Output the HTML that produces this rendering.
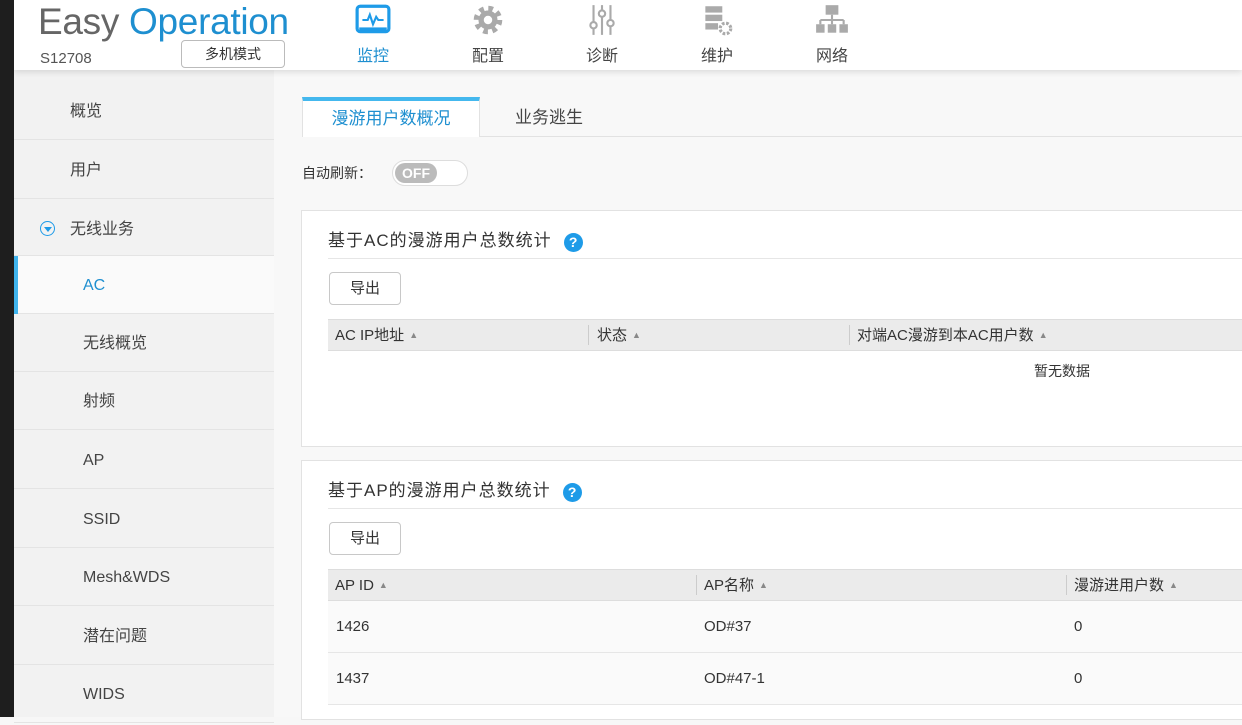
<!DOCTYPE html>
<html><head><meta charset="utf-8"><style>
*{box-sizing:border-box;margin:0;padding:0}
body{width:1242px;height:717px;overflow:hidden;background:#f7f7f7;font-family:"Liberation Sans","Noto Sans CJK SC",sans-serif;position:relative;color:#333}
.strip{position:absolute;left:0;top:0;width:14px;height:717px;background:#1e1e1e;z-index:5}
.hdr{position:absolute;left:14px;top:0;width:1228px;height:70px;background:#fff;box-shadow:0 2px 6px rgba(0,0,0,.12);z-index:3}
.logo{position:absolute;left:24px;top:1px;font-size:37px;color:#666;letter-spacing:-0.3px}
.logo span{color:#1e8fd0}
.model{position:absolute;left:26px;top:50px;font-size:15px;color:#555}
.mbtn{position:absolute;left:167px;top:40px;width:104px;height:28px;border:1px solid #bbb;border-radius:4px;font-size:14px;text-align:center;line-height:26px;color:#333;background:#fff}
.nav{position:absolute;top:0;width:60px;text-align:center;font-size:16px;color:#444}
.nav svg{display:block;margin:3px auto 5px}
.side{position:absolute;left:14px;top:70px;width:260px;height:647px;background:#f2f2f2}
.it{position:absolute;left:0;width:260px;height:58px;border-bottom:1px solid #e4e4e4;font-size:16px;color:#444;line-height:60px}
.main{position:absolute;left:274px;top:70px;width:968px;height:647px;background:#f8f8f8}
.tab{position:absolute;top:27px;height:40px;font-size:17px;line-height:42px;text-align:center}
.panel{position:absolute;left:27px;width:950px;background:#fff;border:1px solid #e2e2e2}
.ttl{position:absolute;left:26px;font-size:17px;color:#333;letter-spacing:1px}
.q{display:inline-block;width:19px;height:19px;border-radius:50%;background:#1e9be8;color:#fff;font-size:14px;font-weight:bold;text-align:center;line-height:19px;margin-left:12px;vertical-align:-1px;letter-spacing:0}
.ln{position:absolute;left:26px;right:0;height:1px;background:#e6e6e6}
.btn{position:absolute;left:27px;width:72px;height:33px;border:1px solid #c8c8c8;border-radius:4px;font-size:15px;text-align:center;line-height:31px;background:#fff}
.th{position:absolute;left:26px;right:0;height:32px;background:#ebebeb;border-top:1px solid #ddd;border-bottom:1px solid #ddd;font-size:15px;line-height:30px}
.th span{position:absolute;top:0}
.th i{font-style:normal;font-size:9px;color:#888;margin-left:5px;vertical-align:2px}
.sep{position:absolute;top:5px;width:1px;height:20px;background:#ccc}
.row{position:absolute;left:26px;right:0;height:52px;border-bottom:1px solid #e6e6e6;font-size:15px;line-height:52px;background:#fafafa}
.row span{position:absolute}
</style></head><body>
<div class="strip"></div>
<div class="hdr">
<div class="logo">Easy <span>Operation</span></div>
<div class="model">S12708</div>
<div class="mbtn">多机模式</div>
<div class="nav" style="left:329px;color:#1e8fd0"><svg width="36" height="34" viewBox="0 0 34 30"><rect x="2" y="2" width="30" height="24" rx="3" fill="none" stroke="#1e9be8" stroke-width="3"/><path d="M7 15h5l2-5 3 9 3-7 2 3h5" fill="none" stroke="#1e9be8" stroke-width="2"/><rect x="4" y="22" width="26" height="3" fill="#1e9be8"/></svg>监控</div>
<div class="nav" style="left:444px"><svg width="36" height="34" viewBox="0 0 34 30"><circle cx="17" cy="15" r="10" fill="none" stroke="#aaa" stroke-width="7" stroke-dasharray="4 3.85"/><circle cx="17" cy="15" r="9" fill="#aaa"/><circle cx="17" cy="15" r="4" fill="#fff"/></svg>配置</div>
<div class="nav" style="left:558px"><svg width="36" height="34" viewBox="0 0 34 30"><g stroke="#aaa" stroke-width="2"><path d="M9 1v28M17 1v28M25 1v28"/></g><g fill="#fff" stroke="#aaa" stroke-width="2"><circle cx="9" cy="20" r="3"/><circle cx="17" cy="9" r="3"/><circle cx="25" cy="18" r="3"/></g></svg>诊断</div>
<div class="nav" style="left:673px"><svg width="36" height="34" viewBox="0 0 34 30"><rect x="6" y="2" width="16" height="6" fill="#aaa"/><rect x="6" y="10" width="16" height="6" fill="#aaa"/><rect x="6" y="18" width="12" height="6" fill="#aaa"/><circle cx="25" cy="23" r="5" fill="none" stroke="#aaa" stroke-width="3" stroke-dasharray="2.5 1.5"/></svg>维护</div>
<div class="nav" style="left:788px"><svg width="36" height="34" viewBox="0 0 34 30"><rect x="11" y="1" width="12" height="9" fill="#aaa"/><path d="M17 10v5M6 15h22M6 15v4M17 15v4M28 15v4" stroke="#aaa" stroke-width="2" fill="none"/><rect x="2" y="19" width="8" height="8" fill="#aaa"/><rect x="13" y="19" width="8" height="8" fill="#aaa"/><rect x="24" y="19" width="8" height="8" fill="#aaa"/></svg>网络</div>
</div>
<div class="side">
<div class="it" style="top:12px;padding-left:56px">概览</div>
<div class="it" style="top:71px;padding-left:56px">用户</div>
<div class="it" style="top:130px;padding-left:56px;height:56px"><span style="position:absolute;left:26px;top:21px;width:15px;height:15px;border:1.5px solid #1e9be8;border-radius:50%"></span><span style="position:absolute;left:30px;top:27px;border-left:4px solid transparent;border-right:4px solid transparent;border-top:5px solid #1e9be8"></span>无线业务</div>
<div class="it" style="top:186px;padding-left:69px;background:#fafafa;color:#1e8fd0"><span style="position:absolute;left:0;top:0;width:4px;height:58px;background:#3fb4ee"></span>AC</div>
<div class="it" style="top:244px;padding-left:69px">无线概览</div>
<div class="it" style="top:302px;padding-left:69px">射频</div>
<div class="it" style="top:361px;padding-left:69px">AP</div>
<div class="it" style="top:420px;padding-left:69px">SSID</div>
<div class="it" style="top:478px;padding-left:69px">Mesh&amp;WDS</div>
<div class="it" style="top:537px;padding-left:69px">潜在问题</div>
<div class="it" style="top:595px;padding-left:69px">WIDS</div>
</div>
<div class="main">
<div style="position:absolute;left:28px;right:0;top:66px;height:1px;background:#e2e2e2"></div>
<div class="tab" style="left:28px;width:178px;background:#fff;border:1px solid #e2e2e2;border-bottom:none;border-top:4px solid #44b8ee;color:#1e8fd0;line-height:36px">漫游用户数概况</div>
<div class="tab" style="left:220px;width:110px;color:#444">业务逃生</div>
<div style="position:absolute;left:28px;top:93px;font-size:14px">自动刷新：</div>
<div style="position:absolute;left:118px;top:90px;width:76px;height:26px;border:1px solid #ddd;border-radius:13px;background:#fff"><div style="position:absolute;left:2px;top:2px;width:42px;height:20px;border-radius:10px;background:#bbb;color:#fff;font-size:14px;font-weight:bold;line-height:20px;text-align:center">OFF</div></div>
<div class="panel" style="top:140px;height:237px">
<div class="ttl" style="top:15px">基于AC的漫游用户总数统计<span class="q">?</span></div>
<div class="ln" style="top:47px"></div>
<div class="btn" style="top:61px">导出</div>
<div class="th" style="top:108px"><span style="left:7px">AC IP地址<i>▲</i></span><div class="sep" style="left:260px"></div><span style="left:269px">状态<i>▲</i></span><div class="sep" style="left:521px"></div><span style="left:529px">对端AC漫游到本AC用户数<i>▲</i></span></div>
<div style="position:absolute;left:732px;top:150px;font-size:14px">暂无数据</div>
</div>
<div class="panel" style="top:390px;height:260px">
<div class="ttl" style="top:15px">基于AP的漫游用户总数统计<span class="q">?</span></div>
<div class="ln" style="top:47px"></div>
<div class="btn" style="top:61px">导出</div>
<div class="th" style="top:108px"><span style="left:7px">AP ID<i>▲</i></span><div class="sep" style="left:368px"></div><span style="left:376px">AP名称<i>▲</i></span><div class="sep" style="left:738px"></div><span style="left:746px">漫游进用户数<i>▲</i></span></div>
<div class="row" style="top:140px"><span style="left:8px">1426</span><span style="left:376px">OD#37</span><span style="left:746px">0</span></div>
<div class="row" style="top:192px"><span style="left:8px">1437</span><span style="left:376px">OD#47-1</span><span style="left:746px">0</span></div>
</div>
</div>
</body></html>
